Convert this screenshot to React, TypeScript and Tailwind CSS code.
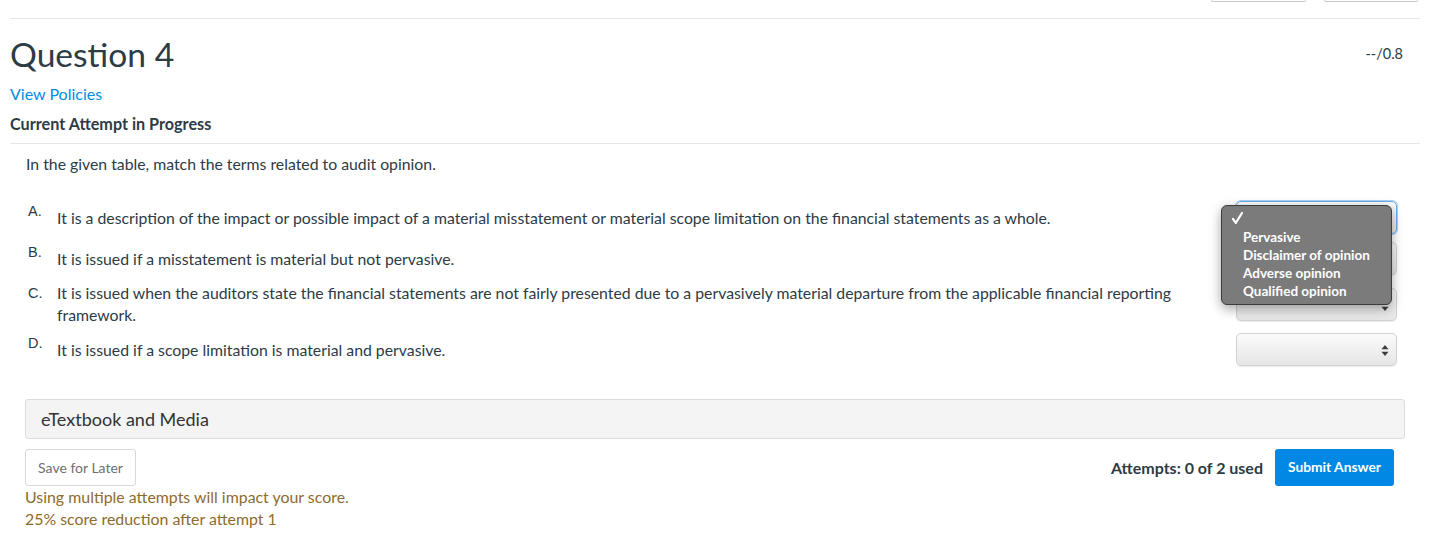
import React from 'react';

const ROWS = [
  {
    key: 'A',
    text: 'It is a description of the impact or possible impact of a material misstatement or material scope limitation on the financial statements as a whole.',
  },
  { key: 'B', text: 'It is issued if a misstatement is material but not pervasive.' },
  {
    key: 'C',
    text: 'It is issued when the auditors state the financial statements are not fairly presented due to a pervasively material departure from the applicable financial reporting framework.',
  },
  { key: 'D', text: 'It is issued if a scope limitation is material and pervasive.' },
];

const OPTIONS = ['Pervasive', 'Disclaimer of opinion', 'Adverse opinion', 'Qualified opinion'];

function SelectBox({ focused }: { focused?: boolean }) {
  return (
    <div
      className={
        'relative h-[33px] w-[161px] rounded-[5px] border bg-gradient-to-b from-[#fbfbfb] to-[#e6e6e6] shadow-[0_1px_1px_rgba(0,0,0,0.08)] ' +
        (focused ? 'border-[#6aaeea] ring-1 ring-[#a9d1f5]' : 'border-[#d2d2d2]')
      }
    >
      <svg className="absolute right-[7px] top-[11px]" width="8" height="11" viewBox="0 0 8 11">
        <path d="M4 0 L7.5 4.2 H0.5 Z" fill="#3d3d3d" />
        <path d="M4 11 L7.5 6.8 H0.5 Z" fill="#3d3d3d" />
      </svg>
    </div>
  );
}

function Popup() {
  return (
    <div className="absolute left-[-15px] top-[4px] z-10 w-[171px] rounded-[6px] border border-[#3c3c3c] bg-[#7b7b7b] pb-[4px] pt-[2px] text-[13.5px] font-bold leading-[18px] text-white shadow-[0_4px_12px_rgba(0,0,0,0.35)]">
      <div className="flex h-[20px] items-center pl-[10px]">
        <svg width="11" height="12" viewBox="0 0 11 12">
          <path d="M1 7 L3.8 10.8 L10 1" fill="none" stroke="#fff" strokeWidth="2.2" strokeLinecap="round" strokeLinejoin="round" />
        </svg>
      </div>
      {OPTIONS.map((o) => (
        <div key={o} className="h-[18px] pl-[21px]">
          {o}
        </div>
      ))}
    </div>
  );
}

export default function App() {
  return (
    <div className="h-[553px] w-[1435px] overflow-hidden bg-white font-['Lato',sans-serif] text-[15.8px] text-[#2d3b45]">
      <div className="ml-[10px] w-[1410px]">
        {/* toolbar tail */}
        <div className="flex h-[19px] items-start justify-end gap-[18px] border-b border-[#e6e6e6] pr-[2px]">
          <div className="h-[2px] w-[95px] rounded-b-[3px] border border-t-0 border-[#c8c8c8]" />
          <div className="h-[2px] w-[94px] rounded-b-[3px] border border-t-0 border-[#c8c8c8]" />
        </div>

        <div className="mt-[15px] flex h-[40px] items-center justify-between pr-[17px]">
          <h1 className="text-[33.6px] leading-[40px] font-normal">Question 4</h1>
          <span className="text-[14.5px]">--/0.8</span>
        </div>

        <div className="mt-[10px] text-[16px] leading-[20px] text-[#008ee2]">View Policies</div>
        <div className="mt-[10px] border-b border-[#e6e6e6] pb-[9px] text-[16.2px] font-bold leading-[20px]">
          Current Attempt in Progress
        </div>

        <div className="px-[15px]">
          <p className="mt-[10px] pl-[1px] leading-[20px]">In the given table, match the terms related to audit opinion.</p>

          <div className="mt-[26px] flex flex-col gap-[6px] pr-[8px]">
            {ROWS.map((r, i) => (
              <div key={r.key} className="flex min-h-[35px] items-center">
                <div className="w-[32px] self-start pl-[3px] font-['Liberation_Sans',sans-serif] text-[14.5px] leading-[22px]">
                  {r.key}.
                </div>
                <div className="flex-1 pr-[34px] leading-[22px]">{r.text}</div>
                <div className="relative">
                  <SelectBox focused={i === 0} />
                  {i === 0 && <Popup />}
                </div>
              </div>
            ))}
          </div>

          <div className="mt-[32px] flex h-[40px] items-center rounded-[3px] border border-[#dcdcdc] bg-[#f4f4f4] pl-[15px] text-[18px] text-[#333]">
            eTextbook and Media
          </div>

          <div className="mt-[10px] flex items-center justify-between pr-[11px]">
            <button className="h-[37px] w-[111px] rounded-[3px] border border-[#d9d9d9] bg-white text-[14px] text-[#6f6f6f]">
              Save for Later
            </button>
            <div className="flex items-center gap-[12px]">
              <span className="text-[16px] font-bold">Attempts: 0 of 2 used</span>
              <button className="h-[37px] w-[119px] rounded-[3px] bg-[#0088e4] text-[13.8px] font-bold text-white">
                Submit Answer
              </button>
            </div>
          </div>

          <div className="text-[15.9px] leading-[22px] text-[#8d6b2c]">
            <div>Using multiple attempts will impact your score.</div>
            <div>25% score reduction after attempt 1</div>
          </div>
        </div>
      </div>
    </div>
  );
}
